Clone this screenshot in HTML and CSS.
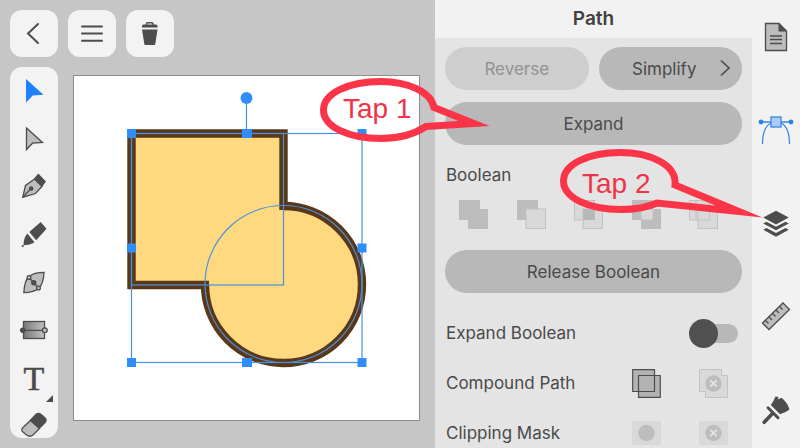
FILE: index.html
```html
<!DOCTYPE html>
<html lang="en">

<head>
    <meta charset="UTF-8">
    <meta name="viewport" content="width=device-width, initial-scale=1.0">
    <title>Path</title>
    <link rel="stylesheet" href="styles.css">
</head>

<body>
    <div class="app">

        <!-- Drawing area -->
        <main class="workspace">
            <div class="top-bar">
                <button class="top-btn" aria-label="Back">
                    <svg width="48" height="47" viewBox="0 0 48 47"><path class="line" d="M28 14 L18 23.500 L28 33"/></svg>
                </button>
                <button class="top-btn" aria-label="Menu">
                    <svg width="48" height="47" viewBox="0 0 48 47"><path class="line" d="M14 16.500 H34 M14 23.500 H34 M14 30.700 H34"/></svg>
                </button>
                <button class="top-btn" aria-label="Delete">
                    <svg width="48" height="47" viewBox="0 0 48 47">
                        <path d="M20.500 15 V13.500 Q20.500 12.700 21.500 12.700 H26 Q27 12.700 27 13.500 V15" fill="none" stroke="#4d4d4d" stroke-width="1.400"/>
                        <path class="solid" d="M17.500 14.500 H30 Q31.500 14.500 31.500 16 V17.500 H16 V16 Q16 14.500 17.500 14.500 Z M16 19.500 H31.500 L29.300 34 Q29.100 35 28 35 H19.500 Q18.500 35 18.300 34 Z"/>
                    </svg>
                </button>
            </div>

            <div class="stage">
                <div class="tools">
                    <button class="tool" aria-label="Select">
                        <svg width="48" height="48" viewBox="0 0 48 48"><path fill="#1e82fb" d="M16 12 L33.500 27.800 L22.800 28.600 L16 35.500 Z"/></svg>
                    </button>
                    <button class="tool" aria-label="Direct select">
                        <svg width="48" height="48" viewBox="0 0 48 48"><path class="shade" d="M16.500 13 L32.500 27.500 L22.500 28.200 L16.500 34.500 Z"/></svg>
                    </button>
                    <button class="tool" aria-label="Pen">
                        <svg width="48" height="48" viewBox="0 0 48 48">
                            <path class="shade" d="M12.800 34.200 L15.500 22.500 L24.500 16 L32 23.500 L25.500 30.500 Z"/>
                            <path class="solid" d="M24 15.500 L28.300 10.500 L36 18.500 L32 24 Z"/>
                            <path class="thin" d="M13 34 L21 25.500"/>
                            <circle class="solid" cx="21.200" cy="25.500" r="2.200"/>
                        </svg>
                    </button>
                    <button class="tool" aria-label="Marker">
                        <svg width="48" height="48" viewBox="0 0 48 48">
                            <path class="solid" d="M19.300 21 L30.700 11 L36.500 17.800 L26.200 29.300 Z M17.300 22.500 L24.500 31.300 Q20 34.300 13.500 34.300 Q13.500 27 17.300 22.500 Z"/>
                            <circle class="solid" cx="12.700" cy="35" r="1.100"/>
                        </svg>
                    </button>
                    <button class="tool" aria-label="Gradient mesh">
                        <svg width="48" height="48" viewBox="0 0 48 48">
                            <path class="shade" d="M13.800 33.700 Q14.500 21.500 19 17.500 Q24 13.300 34 13.300 Q33.500 24.500 29 29 Q24 33.500 13.800 33.700 Z"/>
                            <path class="thin" d="M19 18.500 L28.500 29"/>
                            <circle class="shade" cx="19" cy="18.500" r="1.900"/>
                            <circle class="shade" cx="28.500" cy="29" r="1.900"/>
                            <circle class="solid" cx="23.800" cy="23.700" r="2.700"/>
                        </svg>
                    </button>
                    <button class="tool" aria-label="Gradient">
                        <svg width="48" height="48" viewBox="0 0 48 48">
                            <defs>
                                <linearGradient id="fade"><stop offset="0" stop-color="#777"/><stop offset="1" stop-color="#c2c2c2"/></linearGradient>
                            </defs>
                            <rect x="13.500" y="14.500" width="21" height="17" fill="url(#fade)" stroke="#4d4d4d" stroke-width="1.300"/>
                            <path class="thin" d="M13 23.300 H34"/>
                            <circle class="solid" cx="12.800" cy="23.300" r="2.800"/>
                            <circle class="shade" cx="34.800" cy="23.300" r="2.400"/>
                        </svg>
                    </button>
                    <button class="tool tool-text" aria-label="Text">
                        T
                        <svg class="corner" width="7" height="7" viewBox="0 0 7 7"><path class="solid" d="M7 0 V7 H0 Z"/></svg>
                    </button>
                    <button class="tool" aria-label="Eraser">
                        <svg width="48" height="48" viewBox="0 0 48 48">
                            <path class="shade" d="M20.500 17.500 L29.500 25.500 L23 32 Q20 34.500 16.500 32 L13 29 Q10.500 27 13 24.500 Z"/>
                            <path class="solid" d="M19.500 17.200 L25.500 11 Q28.500 8.500 31.500 11 L35.500 14.500 Q38 17 35.500 20 L29.500 26 Z"/>
                        </svg>
                    </button>
                </div>

                <div class="artboard">
                    <svg viewBox="74 76 345 344">
                        <path d="M131.500 133.500 H283.500 V206 A79 79 0 1 1 205 285 H131.500 Z" fill="#ffd97f"/>
                        <path d="M283.500 210 V133.500 H131.500 V285 H209" fill="none" stroke="#5a3716" stroke-width="8.400"/>
                        <path d="M283 206 A78.500 78.500 0 1 1 205 284" fill="none" stroke="#5a3716" stroke-width="8.400"/>
                        <g fill="none" stroke="#4a90e0" stroke-width="1.200">
                            <rect x="131.500" y="133.500" width="152" height="151.500"/>
                            <circle cx="283.500" cy="284" r="78.500"/>
                            <rect x="131.500" y="133.500" width="230.500" height="229"/>
                            <path d="M246.500 98 V133"/>
                        </g>
                        <g fill="#308efc">
                            <circle cx="246.500" cy="98" r="6"/>
                            <rect x="127" y="129" width="9" height="9"/>
                            <rect x="242" y="129" width="10" height="9"/>
                            <rect x="357.500" y="129" width="9" height="9"/>
                            <rect x="127" y="243.500" width="9" height="9"/>
                            <rect x="357.500" y="243.500" width="9" height="9"/>
                            <rect x="127" y="358" width="9" height="9"/>
                            <rect x="242" y="358" width="10" height="9"/>
                            <rect x="357.500" y="358" width="9" height="9"/>
                        </g>
                    </svg>
                </div>
            </div>
        </main>

        <!-- Path panel -->
        <section class="panel">
            <h1 class="panel-title">Path</h1>

            <div class="panel-body">
                <div class="pair">
                    <button class="pill" disabled>Reverse</button>
                    <button class="pill pill-more">Simplify
                        <svg width="12" height="18" viewBox="0 0 12 18"><path d="M2 1.500 L10 9 L2 16.500" fill="none" stroke="#4d4d4d" stroke-width="1.700"/></svg>
                    </button>
                </div>
                <button class="pill">Expand</button>

                <h2 class="label">Boolean</h2>
                <div class="booleans">
                    <button class="icon-btn" aria-label="Union" disabled>
                        <svg width="29" height="29" viewBox="0 0 29 29"><path fill="#bdbdbd" d="M0 0 H21 V9 H29 V29 H9 V20 H0 Z"/></svg>
                    </button>
                    <button class="icon-btn" aria-label="Subtract" disabled>
                        <svg width="29" height="29" viewBox="0 0 29 29"><path fill="#bdbdbd" d="M0 0 H21 V20 H0 Z"/><rect class="ghost" x="9" y="9" width="19.500" height="19.500"/></svg>
                    </button>
                    <button class="icon-btn" aria-label="Intersect" disabled>
                        <svg width="29" height="29" viewBox="0 0 29 29"><rect class="ghost" x="0.500" y="0.500" width="20" height="19.500"/><rect class="ghost" x="9" y="9" width="19.500" height="19.500"/><rect x="9" y="9" width="12" height="11" fill="#b8b8b8"/></svg>
                    </button>
                    <button class="icon-btn" aria-label="Exclude" disabled>
                        <svg width="29" height="29" viewBox="0 0 29 29"><path fill="#bdbdbd" fill-rule="evenodd" d="M0 0 H21 V20 H0 Z M9 9 H29 V29 H9 Z"/><rect class="ghost" x="9" y="9" width="12" height="11"/></svg>
                    </button>
                    <button class="icon-btn" aria-label="Divide" disabled>
                        <svg width="29" height="29" viewBox="0 0 29 29"><rect class="ghost" x="0.500" y="0.500" width="20" height="19.500"/><rect class="ghost" x="9" y="9" width="19.500" height="19.500"/><path d="M7 0.500 V20 M9 9 H20.500 V20 H9" fill="none" stroke="#c2c2c2"/></svg>
                    </button>
                </div>
                <button class="pill">Release Boolean</button>

                <div class="options">
                    <div class="row row-switch">
                        <label class="label" for="expandBoolean">Expand Boolean</label>
                        <input class="switch" type="checkbox" id="expandBoolean">
                    </div>
                    <div class="row">
                        <span class="label">Compound Path</span>
                        <div class="row-icons">
                            <button class="icon-btn" aria-label="Make compound path">
                                <svg width="29" height="29" viewBox="0 0 29 29"><path fill="#b3b3b3" d="M1 1 H22 V7 H28 V28 H7 V22 H1 Z"/><path d="M0.700 0.700 H22.500 V22.500 H0.700 Z M6.500 6.500 H28.300 V28.300 H6.500 Z" fill="none" stroke="#4d4d4d" stroke-width="1.200"/></svg>
                            </button>
                            <button class="icon-btn" aria-label="Release compound path" disabled>
                                <svg width="29" height="29" viewBox="0 0 29 29"><path class="ghost" d="M0.500 0.500 H22.500 V6.500 H28.500 V28.500 H6.500 V22.500 H0.500 Z"/><circle cx="14.500" cy="14.500" r="8.200" fill="#bdbdbd"/><path class="cross" d="M11.300 11.300 L17.700 17.700 M17.700 11.300 L11.300 17.700"/></svg>
                            </button>
                        </div>
                    </div>
                    <div class="row">
                        <span class="label">Clipping Mask</span>
                        <div class="row-icons">
                            <button class="icon-btn" aria-label="Make clipping mask" disabled>
                                <svg width="29" height="24" viewBox="0 0 29 24"><rect width="29" height="24" fill="#d9d9d9"/><circle cx="14.500" cy="12" r="8.200" fill="#bdbdbd"/></svg>
                            </button>
                            <button class="icon-btn" aria-label="Release clipping mask" disabled>
                                <svg width="29" height="24" viewBox="0 0 29 24"><rect width="29" height="24" fill="#d9d9d9"/><circle cx="14.500" cy="12" r="8.200" fill="#bdbdbd"/><path class="cross" d="M11.300 8.800 L17.700 15.200 M17.700 8.800 L11.300 15.200"/></svg>
                            </button>
                        </div>
                    </div>
                </div>
            </div>

            <!-- Callouts over the panel -->
            <div class="callout callout-one">
                <svg width="172" height="66" viewBox="0 0 172 66"><path d="M114 29.500 C111 14 88 3.500 61 3.500 C29 3.500 3.500 15 3.500 32 C3.500 49 29 60.500 61 60.500 C80 60.500 96 55 106 48.500 L154 45.500 Z"/></svg>
                <span class="callout-text">Tap 1</span>
            </div>
            <div class="callout callout-two">
                <svg width="203" height="69" viewBox="0 0 203 69"><path d="M115 36 C117 16 91 3.500 60 3.500 C29 3.500 3.500 15 3.500 32 C3.500 49 29 60.500 61 60.500 C76 60.500 88 58 97 54 L179 62.500 Z"/></svg>
                <span class="callout-text">Tap 2</span>
            </div>
        </section>

        <!-- Right rail -->
        <nav class="rail">
            <button class="rail-btn" aria-label="Document">
                <svg width="48" height="48" viewBox="0 0 48 48">
                    <path class="shade" d="M13.500 10.500 H27 L34.500 18 V37.500 H13.500 Z"/>
                    <path class="solid" d="M26.500 10 L35 18.500 H26.500 Z"/>
                    <path class="thin" d="M18 23 H30 M18 26.500 H30 M18 30.500 H30"/>
                </svg>
            </button>
            <button class="rail-btn" aria-label="Path">
                <svg width="48" height="48" viewBox="0 0 48 48">
                    <path d="M9 16 H39 M10.500 38 C10.500 26 13 20 19 17 M37.500 38 C37.500 26 35 20 29 17" fill="none" stroke="#3a86dc" stroke-width="1.300"/>
                    <rect x="19" y="11" width="10" height="10" fill="#a9cdf8" stroke="#3a86dc" stroke-width="1.300"/>
                    <circle cx="9" cy="16" r="2.400" fill="#2484f0"/>
                    <circle cx="39" cy="16" r="2.400" fill="#2484f0"/>
                </svg>
            </button>
            <button class="rail-btn" aria-label="Layers">
                <svg width="48" height="48" viewBox="0 0 48 48"><path class="solid" d="M24 11.800 L36.800 18.600 L24 25.400 L11.200 18.600 Z M11.200 24.500 L14.500 22.700 L24 27.800 L33.500 22.700 L36.800 24.500 L24 31.300 Z M11.200 30.800 L14.500 29 L24 34.100 L33.500 29 L36.800 30.800 L24 37.800 Z"/></svg>
            </button>
            <button class="rail-btn" aria-label="Ruler">
                <svg width="48" height="48" viewBox="0 0 48 48">
                    <path class="shade" d="M10.500 31 L31 11 L37.500 17.500 L17 37.500 Z"/>
                    <path class="thin" d="M13.500 28.500 L16.500 31.500 M17 25 L20 28 M20.500 21.500 L23.500 24.500 M24 18 L27 21 M27.500 14.500 L30.500 17.500"/>
                </svg>
            </button>
            <button class="rail-btn" aria-label="Brush">
                <svg width="48" height="48" viewBox="0 0 48 48">
                    <path class="solid" d="M23.500 11.500 L26.500 12 L25.800 14.500 L29.500 12.800 Q35.500 17.500 37.500 24.500 Q33 28 28 29.200 L18.800 20 Q21.500 16.500 23.500 11.500 Z"/>
                    <path d="M16 22.800 L26 32.800" fill="none" stroke="#4d4d4d" stroke-width="3" stroke-linecap="round"/>
                    <path d="M20.500 28.500 L12.200 37.300" fill="none" stroke="#4d4d4d" stroke-width="3.600" stroke-linecap="round"/>
                </svg>
            </button>
        </nav>
    </div>
</body>

</html>
```
FILE: styles.css
```css
/* Reset */
* {
    margin: 0;
    padding: 0;
    box-sizing: border-box;
}

body {
    font-family: Inter, "Liberation Sans", sans-serif;
    font-size: 17px;
    color: #4a4a4a;
    background-color: #c6c6c6;
}

button {
    font: inherit;
    color: inherit;
    background: none;
    border: none;
    cursor: pointer;
}

svg {
    display: block;
}

.app {
    display: flex;
    height: 100vh;
    overflow: hidden;
}

/* Icon strokes and fills */
.line {
    fill: none;
    stroke: #4d4d4d;
    stroke-width: 2;
    stroke-linecap: round;
}

.thin {
    fill: none;
    stroke: #4d4d4d;
    stroke-width: 1.3;
}

.solid {
    fill: #4d4d4d;
}

.shade {
    fill: #bdbdbd;
    stroke: #4d4d4d;
    stroke-width: 1.3;
}

.ghost {
    fill: #d9d9d9;
    stroke: #c2c2c2;
}

.cross {
    fill: none;
    stroke: #e4e4e4;
    stroke-width: 1.8;
}

/* Workspace */
.workspace {
    flex: 1;
    min-width: 0;
    display: flex;
    flex-direction: column;
    padding: 10px 15px 10px 10px;
}

.top-bar {
    display: flex;
    gap: 10px;
    margin-bottom: 10px;
}

.top-btn {
    width: 48px;
    height: 47px;
    border-radius: 12px;
    background-color: #f3f3f3;
}

.stage {
    flex: 1;
    min-height: 0;
    display: flex;
    align-items: stretch;
    gap: 15px;
}

.tools {
    display: flex;
    flex-direction: column;
    width: 48px;
    border-radius: 12px;
    background-color: #f3f3f3;
    overflow: hidden;
}

.tool {
    flex-shrink: 0;
    height: 48px;
}

.tool-text {
    position: relative;
    font-family: "Liberation Serif", serif;
    font-size: 34px;
    line-height: 46px;
    -webkit-text-stroke: 0.5px #4a4a4a;
}

.corner {
    position: absolute;
    right: 5px;
    bottom: 7px;
}

.tool-text .corner {
    bottom: 1px;
}

.artboard {
    flex: 1;
    align-self: flex-start;
    margin-top: 8px;
    background-color: #fff;
    border: 1px solid #8c8c8c;
}

/* Panel */
.panel {
    position: relative;
    display: flex;
    flex-direction: column;
    width: 317px;
    background-color: #e4e4e4;
}

.panel-title {
    flex-shrink: 0;
    height: 38px;
    line-height: 37px;
    font-size: 19px;
    font-weight: 600;
    text-align: center;
    color: #404040;
    background-color: #f2f2f2;
}

.panel-body {
    flex: 1;
    min-height: 0;
    overflow: hidden;
    padding: 9px 10px 0;
}

.pair {
    display: grid;
    grid-template-columns: 1fr 1fr;
    gap: 10px;
    margin-bottom: 12px;
}

.pill {
    position: relative;
    display: block;
    width: 100%;
    height: 43px;
    border-radius: 22px;
    background-color: #b8b8b8;
}

.pill:disabled {
    color: #929292;
    background-color: #cecece;
}

.pill-more {
    padding-right: 12px;
}

.pill-more svg {
    position: absolute;
    right: 11px;
    top: 12px;
}

.label {
    font-size: 17px;
    font-weight: 400;
    line-height: 20px;
}

h2.label {
    margin: 20px 1px 15px;
}

.booleans {
    display: flex;
    justify-content: space-between;
    padding: 0 24px 0 14px;
    margin-bottom: 21px;
}

.options {
    margin-top: 15px;
}

.row {
    display: flex;
    justify-content: space-between;
    align-items: center;
    height: 50px;
    padding: 0 14px 0 1px;
}

.row-switch {
    padding-right: 4px;
}

.row-icons {
    display: flex;
    gap: 38px;
}

/* Toggle switch */
.switch {
    appearance: none;
    display: grid;
    align-items: center;
    width: 49px;
    height: 29px;
    cursor: pointer;
}

.switch::before,
.switch::after {
    content: "";
    grid-area: 1 / 1;
}

.switch::before {
    height: 19px;
    margin-left: 6px;
    border-radius: 10px;
    background-color: #b8b8b8;
}

.switch::after {
    width: 29px;
    height: 29px;
    border-radius: 50%;
    background-color: #505050;
}

.switch:checked::after {
    justify-self: end;
}

/* Callouts */
.callout {
    position: absolute;
    pointer-events: none;
}

.callout path {
    fill: none;
    stroke: #fc3448;
    stroke-width: 7;
    stroke-miterlimit: 12;
}

.callout-one {
    left: -115px;
    top: 78px;
}

.callout-two {
    left: 125px;
    top: 149px;
}

.callout-text {
    position: absolute;
    left: 23px;
    top: 15px;
    font-family: "Liberation Sans", Arial, sans-serif;
    font-size: 28px;
    line-height: 32px;
    white-space: nowrap;
    color: #f03348;
}

.callout-two .callout-text {
    left: 22px;
    top: 19px;
}

/* Right rail */
.rail {
    display: flex;
    flex-direction: column;
    justify-content: space-between;
    width: 48px;
    padding: 13px 0 15px;
    background-color: #f2f2f2;
}

.rail-btn {
    height: 48px;
}
```
